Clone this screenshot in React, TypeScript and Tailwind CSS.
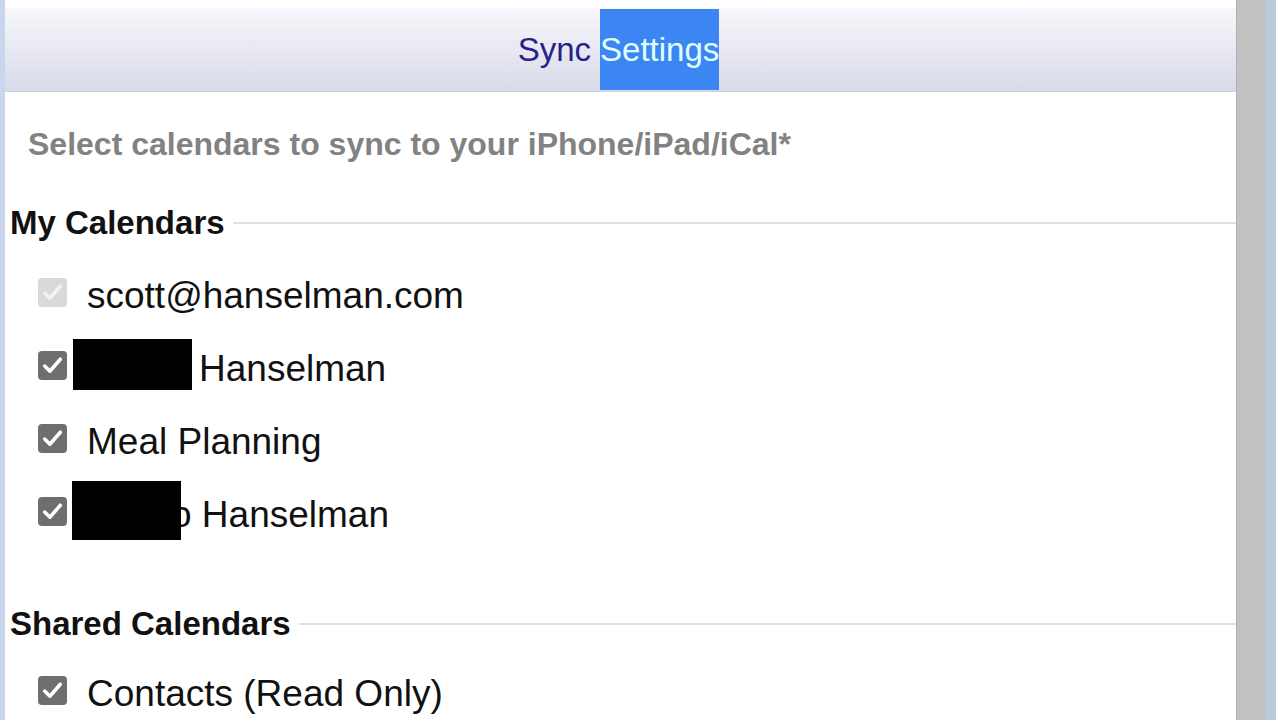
import React from 'react'

const font = { fontFamily: '"Liberation Sans", Arial, sans-serif' }

function Check({ disabled }: { disabled?: boolean }) {
  return (
    <span
      className={
        'mb-[6px] flex h-[29px] w-[29px] shrink-0 items-center justify-center rounded-[4px] ' +
        (disabled ? 'bg-[#d9d9d9]' : 'bg-[#6e6e6e]')
      }
    >
      <svg viewBox="0 0 24 24" className="h-[25px] w-[25px]" fill="none">
        <path
          d="M4.5 12.5l5 5L19.5 6"
          stroke={disabled ? '#f2f2f2' : '#ffffff'}
          strokeWidth="3.4"
          strokeLinecap="round"
          strokeLinejoin="round"
        />
      </svg>
    </span>
  )
}

function Row({ disabled, children }: { disabled?: boolean; children: React.ReactNode }) {
  return (
    <div className="flex h-[73px] items-center pl-[33px]">
      <Check disabled={disabled} />
      <div className="ml-[20px] flex items-center text-[37px] leading-[73px] text-[#111]">{children}</div>
    </div>
  )
}

function Heading({ label }: { label: string }) {
  return (
    <div className="flex h-[40px] items-center pl-[5px]">
      <span className="text-[33px] font-bold leading-[40px] text-[#111]">{label}</span>
      <span className="ml-[8px] h-[2px] flex-1 bg-[#e0e0e0]" />
    </div>
  )
}

export default function App() {
  return (
    <div className="flex h-[720px] w-full overflow-hidden bg-white" style={font}>
      <div className="w-[5px] shrink-0 bg-[#c8d6ee]" />

      <div className="min-w-0 flex-1 pt-[8px]">
        {/* title bar */}
        <div className="flex h-[84px] items-stretch justify-center border-b border-[#cfd0dc] bg-gradient-to-b from-[#f7f7fc] to-[#d9dae9] pr-[4px] text-[33px]">
          <span className="flex items-center pr-[9px] text-[#2a1f88]">Sync</span>
          <span className="my-[1px] flex items-center bg-[#3b86f3] text-[#e2ffff]">Settings</span>
        </div>

        <p className="mt-[32px] pl-[23px] text-[32px] font-bold leading-[40px] text-[#828282]">
          Select calendars to sync to your iPhone/iPad/iCal*
        </p>

        <div className="mt-[39px]">
          <Heading label="My Calendars" />
        </div>

        <div className="mt-[16px]">
          <Row disabled>scott@hanselman.com</Row>
          <Row>
            <span className="-ml-[14px] mb-[8px] h-[51px] w-[119px] bg-black" />
            <span className="ml-[7px]">Hanselman</span>
          </Row>
          <Row>Meal Planning</Row>
          <Row>
            <span className="relative z-10 -ml-[15px] mb-[8px] h-[59px] w-[109px] bg-black" />
            <span className="-ml-[10px]">o Hanselman</span>
          </Row>
        </div>

        <div className="mt-[53px]">
          <Heading label="Shared Calendars" />
        </div>

        <div className="mt-[13px]">
          <Row>Contacts (Read Only)</Row>
        </div>
      </div>

      <div className="w-[30px] shrink-0 border-l border-[#b0b0b0] bg-[#c2c2c2]" />
      <div className="w-[10px] shrink-0 bg-[#b8cbd9]" />
    </div>
  )
}
